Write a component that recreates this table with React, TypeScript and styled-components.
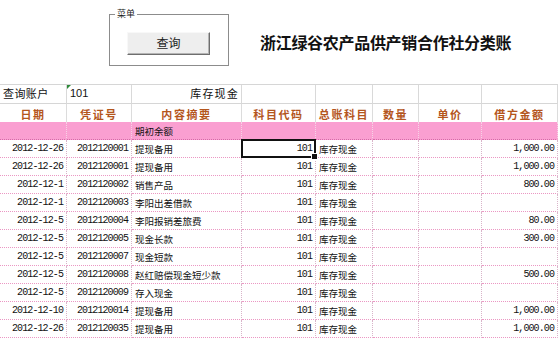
import React from "react";
import styled, { createGlobalStyle, css } from "styled-components";

const GlobalStyle = createGlobalStyle`
  html, body { margin: 0; padding: 0; background: #ffffff; }
  body { font-family: "Noto Sans CJK SC", "Liberation Sans", sans-serif; color: #111; }
  * { box-sizing: border-box; }
`;

const Page = styled.div`
  width: 560px;
  height: 347px;
  overflow: hidden;
  background: #fff;
`;

const TopBar = styled.div`
  height: 84px;
  display: flex;
  align-items: flex-start;
  padding: 14px 0 0 109px;
`;

const GroupBox = styled.div`
  position: relative;
  width: 120px;
  height: 52px;
  border: 1px solid #8c8c8c;
  box-shadow: inset 1px 1px 0 #fff, 1px 1px 0 #fff;
  padding: 14px 0 0 17px;
`;

const Legend = styled.span`
  position: absolute;
  top: -7px;
  left: 5px;
  padding: 0 2px;
  background: #fff;
  font-size: 9px;
  line-height: 12px;
  color: #222;
`;

const MenuButton = styled.button`
  width: 83px;
  height: 23px;
  margin: 0;
  padding: 0;
  background: #eeeeee;
  border: 1px solid;
  border-color: #f8f8f8 #6e6e6e #6e6e6e #f8f8f8;
  box-shadow: inset -1px -1px 0 #b4b4b4;
  font-family: "Noto Sans CJK SC", sans-serif;
  font-size: 12px;
  line-height: 20px;
  color: #222;
`;

const Title = styled.h1`
  margin: 19px 0 0 31px;
  font-family: "Noto Sans CJK SC", sans-serif;
  font-size: 16px;
  font-weight: 700;
  line-height: 18px;
  letter-spacing: -0.3px;
  color: #111;
`;

const Sheet = styled.div`
  display: grid;
  grid-template-columns: 67px 65px 110px 74px 57px 46px 63px 76px;
  grid-auto-rows: 18px;
  grid-template-rows: 19px 18px 18px;
  border-top: 1px solid #d6d6d6;
  width: 558px;
`;

type Align = "left" | "right" | "center";

const baseCell = css<{ $align?: Align }>`
  position: relative;
  display: flex;
  align-items: flex-end;
  overflow: visible;
  white-space: nowrap;
  justify-content: ${(p) =>
    p.$align === "right" ? "flex-end" : p.$align === "center" ? "center" : "flex-start"};
`;

const InfoCell = styled.div<{ $align?: Align; $mark?: boolean }>`
  ${baseCell};
  border-right: 1px solid #d9d9d9;
  border-bottom: 1px solid #d6d6d6;
  padding: 0 2px 3px 3px;
  font-size: 11px;
  line-height: 13px;
  letter-spacing: ${(p) => (p.$align === "right" ? "1.2px" : "0.4px")};
  color: #111;
  ${(p) =>
    p.$mark &&
    css`
      &::before {
        content: "";
        position: absolute;
        top: 0;
        left: 0;
        border-style: solid;
        border-width: 4px 4px 0 0;
        border-color: #2f8a3a transparent transparent transparent;
      }
    `}
`;

const InfoNum = styled.span`
  font-family: "Liberation Sans", sans-serif;
  font-size: 11px;
  letter-spacing: 0;
`;

const HeadCell = styled.div`
  ${baseCell};
  justify-content: center;
  align-items: center;
  border-right: 1px solid #dcdcdc;
  padding-top: 1px;
  font-size: 11px;
  font-weight: 700;
  letter-spacing: 1.6px;
  color: #b4561d;
`;

const OpenCell = styled.div`
  ${baseCell};
  background: #fa9fd1;
  border-right: 1px dotted #f6d3e6;
  border-bottom: 1px dotted #d56ba8;
  padding: 0 0 2px 3px;
  font-size: 9.5px;
  line-height: 12px;
  color: #111;
`;

const DataCell = styled.div<{ $align?: Align; $num?: boolean; $selected?: boolean }>`
  ${baseCell};
  border-right: 1px dotted #d9b4c9;
  border-bottom: 1px dotted #eb97c3;
  padding: ${(p) => (p.$align === "right" ? "0 3px 2px 0" : "0 0 2px 3px")};
  color: #111;
  ${(p) =>
    p.$num
      ? css`
          font-family: "Liberation Mono", monospace;
          font-size: 10px;
          line-height: 12px;
          letter-spacing: -0.9px;
        `
      : css`
          font-size: 9.5px;
          line-height: 12px;
        `}
  ${(p) =>
    p.$selected &&
    css`
      &::after {
        content: "";
        position: absolute;
        top: -1px;
        left: -1px;
        right: -1px;
        bottom: -1px;
        border: 2px solid #111;
        pointer-events: none;
      }
      &::before {
        content: "";
        position: absolute;
        right: -3px;
        bottom: -3px;
        width: 5px;
        height: 5px;
        background: #111;
        border: 1px solid #fff;
        z-index: 2;
      }
    `}
`;

const headers = ["日期", "凭证号", "内容摘要", "科目代码", "总账科目", "数量", "单价", "借方金额"];

type Row = { date: string; no: string; memo: string; amount: string };

const rows: Row[] = [
  { date: "2012-12-26", no: "2012120001", memo: "提现备用", amount: "1,000.00" },
  { date: "2012-12-26", no: "2012120001", memo: "提现备用", amount: "1,000.00" },
  { date: "2012-12-1", no: "2012120002", memo: "销售产品", amount: "800.00" },
  { date: "2012-12-1", no: "2012120003", memo: "李阳出差借款", amount: "" },
  { date: "2012-12-5", no: "2012120004", memo: "李阳报销差旅费", amount: "80.00" },
  { date: "2012-12-5", no: "2012120005", memo: "现金长款", amount: "300.00" },
  { date: "2012-12-5", no: "2012120007", memo: "现金短款", amount: "" },
  { date: "2012-12-5", no: "2012120008", memo: "赵红赔偿现金短少款", amount: "500.00" },
  { date: "2012-12-5", no: "2012120009", memo: "存入现金", amount: "" },
  { date: "2012-12-10", no: "2012120014", memo: "提现备用", amount: "1,000.00" },
  { date: "2012-12-26", no: "2012120035", memo: "提现备用", amount: "1,000.00" },
];

export default function App() {
  return (
    <Page>
      <GlobalStyle />
      <TopBar>
        <GroupBox>
          <Legend>菜单</Legend>
          <MenuButton type="button">查询</MenuButton>
        </GroupBox>
        <Title>浙江绿谷农产品供产销合作社分类账</Title>
      </TopBar>
      <Sheet>
        <InfoCell>查询账户</InfoCell>
        <InfoCell $mark>
          <InfoNum>101</InfoNum>
        </InfoCell>
        <InfoCell $align="right">库存现金</InfoCell>
        <InfoCell />
        <InfoCell />
        <InfoCell />
        <InfoCell />
        <InfoCell />

        {headers.map((h) => (
          <HeadCell key={h}>{h}</HeadCell>
        ))}

        <OpenCell />
        <OpenCell />
        <OpenCell>期初余额</OpenCell>
        <OpenCell />
        <OpenCell />
        <OpenCell />
        <OpenCell />
        <OpenCell />

        {rows.map((r, i) => (
          <React.Fragment key={i}>
            <DataCell $align="right" $num>{r.date}</DataCell>
            <DataCell $align="right" $num>{r.no}</DataCell>
            <DataCell>{r.memo}</DataCell>
            <DataCell $align="right" $num $selected={i === 0}>101</DataCell>
            <DataCell>库存现金</DataCell>
            <DataCell />
            <DataCell />
            <DataCell $align="right" $num>{r.amount}</DataCell>
          </React.Fragment>
        ))}
      </Sheet>
    </Page>
  );
}
